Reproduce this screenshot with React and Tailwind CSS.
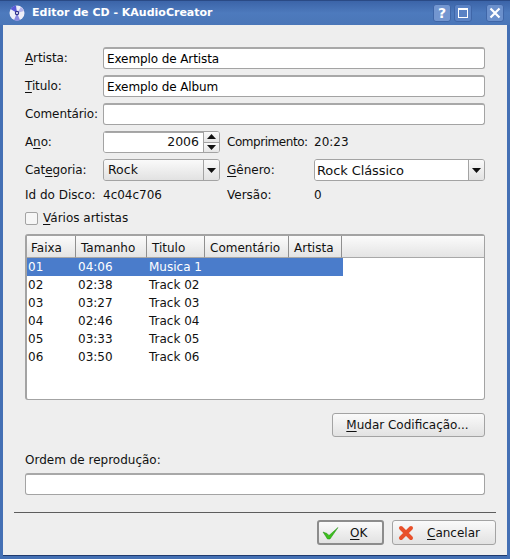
const font = { fontFamily: '"DejaVu Sans", sans-serif' };

function U({ children }) {
  return <span className="underline underline-offset-2">{children}</span>;
}

function Field({ value = "", className = "" }) {
  return (
    <div className={`h-[22px] bg-white border border-[#a3a3a3] border-t-2 border-t-[#a8a8a8] rounded-[3px] pl-[3px] flex items-center text-[12px] tracking-[-0.1px] text-black ${className}`}>
      {value}
    </div>
  );
}

function Row({ label, children, className = "" }) {
  return (
    <div className={`flex items-center ${className}`}>
      <div className="w-[78px] shrink-0 text-[12px] tracking-[-0.1px] whitespace-nowrap">{label}</div>
      {children}
    </div>
  );
}

function Arrow({ up = false }) {
  return (
    <svg width="9" height="5" viewBox="0 0 9 5">
      <path d={up ? "M4.5 0 L9 5 L0 5 Z" : "M0 0 L9 0 L4.5 5 Z"} fill="#111" />
    </svg>
  );
}

function Combo({ value, white = false, className = "" }) {
  return (
    <div className={`h-[22px] flex border border-[#a3a3a3] rounded-[3px] overflow-hidden ${className}`}>
      <div className={`flex-1 flex items-center pt-px border-r border-[#a3a3a3] ${white ? "bg-white pl-[2px] text-[13px] tracking-[-0.1px]" : "bg-gradient-to-b from-[#fafafa] to-[#e2e2e2] pl-[4px] text-[12.5px]"}`}>
        {value}
      </div>
      <div className="w-[15px] bg-gradient-to-b from-[#fafafa] to-[#e2e2e2] flex items-center justify-center">
        <Arrow />
      </div>
    </div>
  );
}

function Head({ w, children, last = false, first = false }) {
  return (
    <div
      className={`h-[22px] flex items-center pt-[2px] text-[12px] bg-gradient-to-b from-[#fbfbfb] to-[#e4e4e4] border-b border-[#a8a8a8] ${first ? "pl-[4px]" : "pl-[5px]"} ${last ? "flex-1" : "border-r border-r-[#8f8f8f]"}`}
      style={w ? { width: w } : undefined}
    >
      {children}
    </div>
  );
}

const tracks = [
  ["01", "04:06", "Musica 1"],
  ["02", "02:38", "Track 02"],
  ["03", "03:27", "Track 03"],
  ["04", "02:46", "Track 04"],
  ["05", "03:33", "Track 05"],
  ["06", "03:50", "Track 06"],
];

function CdIcon() {
  return (
    <svg width="16" height="16" viewBox="0 0 16 16">
      <circle cx="8" cy="8" r="7.5" fill="#eeeef8" />
      <path d="M8 8 L1.5 4 A7.5 7.5 0 0 1 7 .6 Z" fill="#5a5ad8" />
      <path d="M8 8 L11 15 A7.5 7.5 0 0 1 5 15 Z" fill="#8a8ae0" />
      <path d="M8 8 L15 6 A7.5 7.5 0 0 0 12 2 Z" fill="#b4b4ec" />
      <circle cx="8" cy="8" r="2.2" fill="#30308a" />
      <circle cx="8" cy="8" r="1" fill="#fff" />
    </svg>
  );
}

function TitleBtn({ children, className = "" }) {
  return (
    <div className={`w-[18px] h-[18px] rounded-[3px] border border-[#3f66a8] flex items-center justify-center ${className}`}>
      {children}
    </div>
  );
}

export default function App() {
  return (
    <div className="w-[510px] h-[559px] flex flex-col bg-[#4470b4] overflow-hidden text-[#111]" style={font}>
      {/* title bar */}
      <div className="h-[25px] shrink-0 flex items-center pl-[9px] pr-[6px] bg-gradient-to-b from-[#3b64a8] via-[#4d7abd] to-[#4a76b8] border-t border-[#2a4a85]">
        <CdIcon />
        <div className="ml-[7px] flex-1 text-white font-bold text-[11px] whitespace-nowrap">Editor de CD - KAudioCreator</div>
        <TitleBtn className="bg-[#7396d0]">
          <span className="text-white font-bold text-[14px] leading-none">?</span>
        </TitleBtn>
        <TitleBtn className="ml-[3px] bg-[#5a82c4]">
          <div className="w-[10px] h-[10px] border border-t-2 border-white" />
        </TitleBtn>
        <TitleBtn className="ml-[14px] bg-[#6b90cc]">
          <svg width="12" height="12" viewBox="0 0 12 12">
            <path d="M1.5 1.5 L10.5 10.5 M10.5 1.5 L1.5 10.5" stroke="#fff" strokeWidth="2.2" />
          </svg>
        </TitleBtn>
      </div>

      {/* client area */}
      <div className="flex-1 mx-[3px] mb-[3px] bg-[#eeeeee] flex flex-col px-[11px] pt-[22px] border-b border-[#1f3a6e]">
        <div className="pl-[11px] pr-[11px]">
          <Row label={<><U>A</U>rtista:</>}><Field value="Exemplo de Artista" className="flex-1" /></Row>
          <Row label={<><U>T</U>itulo:</>} className="mt-[6px]"><Field value="Exemplo de Album" className="flex-1" /></Row>
          <Row label="Comentário:" className="mt-[6px]"><Field className="flex-1" /></Row>

          <Row label={<>A<U>n</U>o:</>} className="mt-[6px]">
            <div className="w-[117px] h-[22px] flex border border-[#a3a3a3] rounded-[3px] overflow-hidden">
              <div className="flex-1 bg-white border-t border-t-[#a8a8a8] flex items-center justify-end pr-[4px] text-[12.5px]">2006</div>
              <div className="w-[16px] border-l border-[#a3a3a3] flex flex-col bg-[#f2f2f2]">
                <div className="flex-1 flex items-center justify-center border-b border-[#a3a3a3] bg-gradient-to-b from-[#fafafa] to-[#e6e6e6]"><Arrow up /></div>
                <div className="flex-1 flex items-center justify-center bg-gradient-to-b from-[#fafafa] to-[#e6e6e6]"><Arrow /></div>
              </div>
            </div>
            <div className="ml-[7px] w-[87px] text-[12px] tracking-[-0.45px] whitespace-nowrap">Comprimento:</div>
            <div className="text-[12px]">20:23</div>
          </Row>

          <Row label={<>Cat<U>e</U>goria:</>} className="mt-[6px]">
            <Combo value="Rock" className="w-[117px]" />
            <div className="ml-[7px] w-[87px] text-[12px]"><U>G</U>ênero:</div>
            <Combo value="Rock Clássico" white className="flex-1" />
          </Row>

          <div className="flex items-center mt-[6px] h-[15px] text-[12px]">
            <div className="w-[78px] shrink-0 whitespace-nowrap">Id do Disco:</div>
            <div className="w-[124px]">4c04c706</div>
            <div className="w-[87px]">Versão:</div>
            <div>0</div>
          </div>

          <div className="flex items-center mt-[8px] h-[16px] text-[12px]">
            <div className="w-[13px] h-[13px] border border-[#a3a3a3] rounded-[2px] bg-[#f6f6f6] mr-[5px]" />
            <span><U>V</U>ários artistas</span>
          </div>

          {/* table */}
          <div className="mt-[8px] h-[166px] bg-white border border-[#a3a3a3] border-t-2 border-l-2 rounded-[3px] flex flex-col">
            <div className="flex">
              <Head w={49} first>Faixa</Head>
              <Head w={71}>Tamanho</Head>
              <Head w={58}>Titulo</Head>
              <Head w={84}>Comentário</Head>
              <Head w={53}>Artista</Head>
              <Head last />
            </div>
            {tracks.map(([a, b, c], i) => (
              <div key={a} className={`w-[316px] h-[18px] flex items-center text-[12px] ${i === 0 ? "bg-[#4a7ccb] text-white" : ""}`}>
                <div className="w-[49px] pl-[1px]">{a}</div>
                <div className="w-[71px] pl-[2px]">{b}</div>
                <div className="pl-[2px]">{c}</div>
              </div>
            ))}
          </div>

          <div className="mt-[13px] flex justify-end">
            <div className="w-[153px] h-[24px] border border-[#a3a3a3] rounded-[3px] bg-gradient-to-b from-[#fafafa] to-[#e2e2e2] flex items-center justify-center text-[12px] pr-[2px]">
              <span><U>M</U>udar Codificação...</span>
            </div>
          </div>

          <div className="mt-[15px] h-[15px] text-[12px] flex items-center">Ordem de reprodução:</div>
          <Field className="mt-[6px]" />
        </div>

        <div className="mt-[17px] h-px bg-[#5c5c5c]" />

        <div className="mt-[7px] flex justify-end gap-[8px]">
          <div className="w-[67px] h-[25px] border-2 border-[#8c8c8c] rounded-[3px] bg-gradient-to-b from-[#fafafa] to-[#e2e2e2] flex items-center pl-[3px] text-[12px]">
            <svg width="17" height="14" viewBox="0 0 17 14">
              <path d="M1 6 L5 7.5 L7 9.5 L16 1.5 L8 13 L5.5 13 Z" fill="#3cc01c" stroke="#1f8a10" strokeWidth=".5" />
            </svg>
            <span className="ml-[11px]"><U>O</U>K</span>
          </div>
          <div className="w-[104px] h-[25px] border border-[#a3a3a3] rounded-[3px] bg-gradient-to-b from-[#fafafa] to-[#e2e2e2] flex items-center pl-[5px] text-[12px]">
            <svg width="16" height="16" viewBox="0 0 16 16">
              <path d="M3 3 L13 13 M13 3 L3 13" stroke="#e8502a" strokeWidth="4" strokeLinecap="round" />
            </svg>
            <span className="ml-[13px]"><U>C</U>ancelar</span>
          </div>
        </div>
      </div>
    </div>
  );
}
